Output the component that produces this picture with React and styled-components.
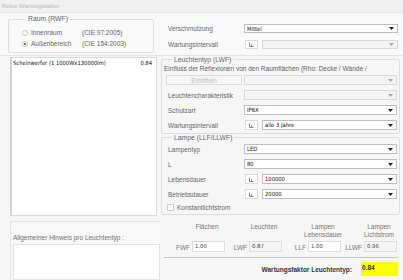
import React from "react";
import styled, { createGlobalStyle } from "styled-components";

const Global = createGlobalStyle`
  html, body { margin: 0; padding: 0; background: #f6f6f6; }
  body { font-family: "Liberation Sans", Arial, sans-serif; }
  * { box-sizing: border-box; }
`;

const Window = styled.div`
  width: 403px;
  height: 280px;
  overflow: hidden;
  background: #f6f6f6;
  display: flex;
  flex-direction: column;
  font-family: "Liberation Sans", Arial, sans-serif;
  font-size: 6.5px;
  color: #666;
`;

const TitleBar = styled.div`
  height: 13px;
  flex: none;
  padding-left: 2px;
  display: flex;
  align-items: center;
  font-size: 6px;
  color: #b8b8b8;
  background: #f0f0f0;
  border-bottom: 1px solid #e6e6e6;
`;

const TopPanel = styled.div`
  height: 43px;
  flex: none;
  display: flex;
  padding: 2px 0 0 8px;
  background: #f9f9f9;
  border-bottom: 1px solid #e2e2e2;
`;

const Group = styled.fieldset`
  margin: 0;
  min-width: 0;
  border: 1px solid #dddddd;
  border-radius: 2px;
  padding: ${(p) => p.$pad || "0"};
  width: ${(p) => p.$w || "auto"};
  height: ${(p) => p.$h || "auto"};
  flex: none;
`;

const Legend = styled.legend`
  padding: 0 2px;
  margin-left: 4px;
  font-size: 6.8px;
  line-height: ${(p) => p.$lh || "8px"};
  color: #666;
`;

const RadioRow = styled.div`
  display: grid;
  grid-template-columns: 60px 1fr;
  align-items: center;
  height: 11px;
`;

const RadioLabel = styled.div`
  display: flex;
  align-items: center;
  gap: 3px;
`;

const Radio = styled.span`
  width: 6px;
  height: 6px;
  border-radius: 50%;
  border: 1px solid #c4c4c4;
  background: #fff;
  display: flex;
  align-items: center;
  justify-content: center;
  &::after {
    content: "";
    width: 2px;
    height: 2px;
    border-radius: 50%;
    background: ${(p) => (p.$on ? "#555" : "transparent")};
  }
`;

const FormGrid = styled.div`
  display: grid;
  grid-template-columns: ${(p) => p.$label || "76px"} 1fr;
  grid-auto-rows: ${(p) => p.$row || "10px"};
  row-gap: ${(p) => p.$gap || "5px"};
  align-items: center;
`;

const TopRight = styled.div`
  flex: 1;
  padding: 9px 5px 0 14px;
`;

const Label = styled.div`
  white-space: nowrap;
  color: #666;
`;

const Control = styled.div`
  display: flex;
  gap: 4px;
  height: 100%;
  margin-left: ${(p) => p.$ml || "0"};
`;

const SelectBox = styled.div`
  flex: 1;
  height: 100%;
  display: flex;
  align-items: center;
  justify-content: space-between;
  padding: 0 3px 0 2px;
  border: 1px solid ${(p) => (p.$disabled ? "#d8d8d8" : "#bdbdbd")};
  background: ${(p) => (p.$disabled ? "#f4f4f4" : "#ffffff")};
  font-size: 5.8px;
  color: #111;
  font-family: "DejaVu Sans Condensed", "DejaVu Sans", sans-serif;
`;

const Arrow = ({ disabled }) => (
  <svg width="5" height="3" viewBox="0 0 5 3">
    <path d="M0 0H5L2.5 3Z" fill={disabled ? "#aaaaaa" : "#222"} />
  </svg>
);

const IconBtn = styled.div`
  width: 13px;
  height: 100%;
  flex: none;
  border: 1px solid #dcdcdc;
  background: #fff;
  display: flex;
  align-items: center;
  justify-content: center;
`;

const ChartIcon = () => (
  <svg width="5" height="5" viewBox="0 0 5 5">
    <path d="M0.5 0.5V4.5H4.5" stroke="#888" strokeWidth="1" fill="none" />
    <path d="M2.5 2.2V4" stroke="#888" strokeWidth="1" />
  </svg>
);

const Select = ({ value, disabled }) => (
  <SelectBox $disabled={disabled}>
    <span>{value}</span>
    <Arrow disabled={disabled} />
  </SelectBox>
);

const MainRow = styled.div`
  height: 165px;
  flex: none;
  display: flex;
`;

const LeftCol = styled.div`
  width: 157px;
  flex: none;
  padding: 1px 0 0 10px;
`;

const List = styled.div`
  height: 159px;
  background: #fff;
  border: 1px solid #d8d8d8;
  border-left: 2px solid #d2d2d2;
  padding: 2px 4px 0 1px;
`;

const ListItem = styled.div`
  display: flex;
  justify-content: space-between;
  font-size: 5.8px;
  color: #111;
  font-family: "DejaVu Sans Condensed", "DejaVu Sans", sans-serif;
`;

const RightCol = styled.div`
  width: 239px;
  margin-left: 4px;
  flex: none;
  display: flex;
  flex-direction: column;
`;

const Note = styled.div`
  line-height: 8px;
  white-space: nowrap;
  margin: 2px 0 2px -4px;
  color: #5e5e5e;
`;

const Button = styled.div`
  width: 76px;
  height: 100%;
  border: 1px solid #dcdcdc;
  background: #f6f6f6;
  color: #bcbcbc;
  display: flex;
  align-items: center;
  justify-content: center;
  margin-left: -2px;
`;

const CheckRow = styled.div`
  display: flex;
  align-items: center;
  gap: 3px;
  height: 10px;
  margin-top: 3px;
  margin-left: -1px;
`;

const Check = styled.span`
  width: 7px;
  height: 7px;
  border: 1px solid #c8c8c8;
  background: #fff;
  border-radius: 1px;
`;

const BottomRow = styled.div`
  flex: 1;
  display: flex;
`;

const NotePanel = styled.div`
  width: 150px;
  margin-left: 10px;
  flex: none;
  border-top: 1px solid #e2e2e2;
  border-left: 1px solid #e2e2e2;
  background: #f8f8f8;
  padding: 12px 0 0 2px;
  display: flex;
  flex-direction: column;
`;

const NoteLabel = styled.div`
  line-height: 8px;
  font-size: 6.5px;
  color: #707070;
`;

const TextArea = styled.div`
  flex: 1;
  margin-top: 2px;
  background: #fff;
  border: 1px solid #e2e2e2;
`;

const Summary = styled.div`
  flex: 1;
  padding: 2px 5px 0 4px;
  display: flex;
  flex-direction: column;
`;

const FactorGrid = styled.div`
  display: grid;
  grid-template-columns: 61px 57px 59px 56px;
`;

const FactorCol = styled.div`
  display: flex;
  flex-direction: column;
  align-items: flex-end;
`;

const Header = styled.div`
  width: 44px;
  margin-right: -4px;
  height: 17px;
  text-align: center;
  line-height: 8px;
  font-size: 6.5px;
  color: #777;
`;

const FactorRow = styled.div`
  display: flex;
  align-items: center;
  gap: 2px;
  height: 12px;
`;

const FactorLabel = styled.span`
  font-size: 6.5px;
  color: #777;
  margin-top: 3px;
`;

const FactorInput = styled.div`
  width: 33px;
  height: 11px;
  border: 1px solid #dcdcdc;
  background: ${(p) => (p.$ro ? "#f4f4f4" : "#ffffff")};
  font-size: 5.3px;
  color: #444;
  padding: 1px 0 0 2px;
  font-family: "DejaVu Sans", sans-serif;
`;

const Divider = styled.div`
  height: 1px;
  background: #c4c4c4;
  margin: 5px 0 4px 0;
`;

const ResultRow = styled.div`
  display: flex;
  justify-content: flex-end;
  align-items: center;
  gap: 9px;
`;

const ResultLabel = styled.span`
  font-weight: bold;
  font-size: 6.5px;
  color: #333;
`;

const ResultBox = styled.div`
  width: 37px;
  height: 14px;
  background: #ffff00;
  font-weight: bold;
  font-size: 6.5px;
  color: #333;
  padding: 2px 0 0 1px;
`;

export default function App() {
  return (
    <>
      <Global />
      <Window>
        <TitleBar>Relux Wartungsfaktor</TitleBar>
        <TopPanel>
          <Group $w="146px" $h="38px" $pad="4px 0 0 13px">
            <Legend>Raum (RWF)</Legend>
            <RadioRow>
              <RadioLabel>
                <Radio />
                Innenraum
              </RadioLabel>
              <span>(CIE 97:2005)</span>
            </RadioRow>
            <RadioRow>
              <RadioLabel>
                <Radio $on />
                Außenbereich
              </RadioLabel>
              <span>(CIE 154:2003)</span>
            </RadioRow>
          </Group>
          <TopRight>
            <FormGrid $row="9px" $gap="7px">
              <Label>Verschmutzung</Label>
              <Control>
                <Select value="Mittel" />
              </Control>
              <Label>Wartungsintervall</Label>
              <Control $ml="1px">
                <IconBtn>
                  <ChartIcon />
                </IconBtn>
                <Select value="" disabled />
              </Control>
            </FormGrid>
          </TopRight>
        </TopPanel>

        <MainRow>
          <LeftCol>
            <List>
              <ListItem>
                <span>Scheinwerfer (1 1000Wx130000lm)</span>
                <span>0.84</span>
              </ListItem>
            </List>
          </LeftCol>
          <RightCol>
            <Group $pad="0 2px 3px 6px">
              <Legend $lh="7px">Leuchtentyp (LWF)</Legend>
              <Note>Einfluss der Reflexionen von den Raumflächen (Rho: Decke / Wände /</Note>
              <FormGrid>
                <Button>Ermitteln</Button>
                <Control>
                  <Select value="" disabled />
                </Control>
                <Label>Leuchtencharakteristik</Label>
                <Control>
                  <Select value="" disabled />
                </Control>
                <Label>Schutzart</Label>
                <Control>
                  <Select value="IP6X" />
                </Control>
                <Label>Wartungsintervall</Label>
                <Control $ml="1px">
                  <IconBtn>
                    <ChartIcon />
                  </IconBtn>
                  <Select value="alle 3 Jahre" />
                </Control>
              </FormGrid>
            </Group>
            <Group $pad="3px 2px 2px 6px">
              <Legend $lh="7px">Lampe (LLF/LLWF)</Legend>
              <FormGrid>
                <Label>Lampentyp</Label>
                <Control>
                  <Select value="LED" />
                </Control>
                <Label>L</Label>
                <Control>
                  <Select value="80" />
                </Control>
                <Label>Lebensdauer</Label>
                <Control $ml="1px">
                  <IconBtn>
                    <ChartIcon />
                  </IconBtn>
                  <Select value="100000" />
                </Control>
                <Label>Betriebsdauer</Label>
                <Control $ml="1px">
                  <IconBtn>
                    <ChartIcon />
                  </IconBtn>
                  <Select value="20000" />
                </Control>
              </FormGrid>
              <CheckRow>
                <Check />
                Konstantlichtstrom
              </CheckRow>
            </Group>
          </RightCol>
        </MainRow>

        <BottomRow>
          <NotePanel>
            <NoteLabel>Allgemeiner Hinweis pro Leuchtentyp :</NoteLabel>
            <TextArea />
          </NotePanel>
          <Summary>
            <FactorGrid>
              <FactorCol>
                <Header>Flächen</Header>
                <FactorRow>
                  <FactorLabel>FWF</FactorLabel>
                  <FactorInput>1.00</FactorInput>
                </FactorRow>
              </FactorCol>
              <FactorCol>
                <Header>Leuchten</Header>
                <FactorRow>
                  <FactorLabel>LWF</FactorLabel>
                  <FactorInput $ro>0.87</FactorInput>
                </FactorRow>
              </FactorCol>
              <FactorCol>
                <Header>
                  Lampen
                  <br />
                  Lebensdauer
                </Header>
                <FactorRow>
                  <FactorLabel>LLF</FactorLabel>
                  <FactorInput>1.00</FactorInput>
                </FactorRow>
              </FactorCol>
              <FactorCol>
                <Header>
                  Lampen
                  <br />
                  Lichtstrom
                </Header>
                <FactorRow>
                  <FactorLabel>LLWF</FactorLabel>
                  <FactorInput $ro>0.96</FactorInput>
                </FactorRow>
              </FactorCol>
            </FactorGrid>
            <Divider />
            <ResultRow>
              <ResultLabel>Wartungsfaktor Leuchtentyp:</ResultLabel>
              <ResultBox>0.84</ResultBox>
            </ResultRow>
          </Summary>
        </BottomRow>
      </Window>
    </>
  );
}
